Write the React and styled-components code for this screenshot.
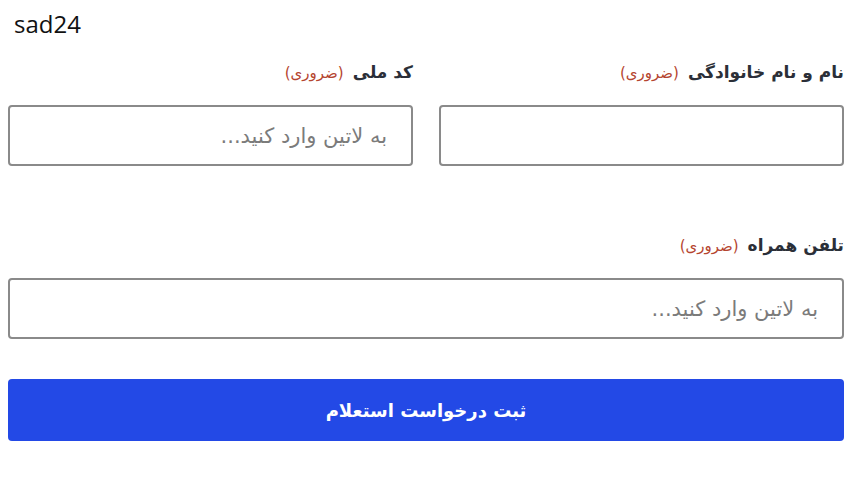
import React from 'react';
import styled, { createGlobalStyle } from 'styled-components';

const GlobalStyle = createGlobalStyle`
  body {
    margin: 0;
    padding: 0;
    background: #fff;
    font-family: 'DejaVu Sans', 'Noto Sans', sans-serif;
  }
`;

const Page = styled.div`
  padding: 10px 6px 0 8px;
`;

const Brand = styled.div`
  font-family: 'Open Sans', 'Noto Sans', sans-serif;
  font-size: 24px;
  color: #111;
  padding-left: 6px;
  height: 30px;
  line-height: 28px;
`;

const Form = styled.form`
  direction: rtl;
  display: grid;
  grid-template-columns: 1fr 1fr;
  column-gap: 26px;
  row-gap: 68px;
  margin-top: 21px;
`;

const Field = styled.div`
  display: flex;
  flex-direction: column;
  gap: 22px;
  grid-column: ${(p) => (p.$wide ? '1 / -1' : 'auto')};
`;

const Label = styled.label`
  display: flex;
  align-items: baseline;
  gap: 9px;
  height: 22px;
  line-height: 22px;
  font-size: 17px;
  font-weight: bold;
  color: #2b2f38;
`;

const Required = styled.span`
  font-size: 15px;
  font-weight: normal;
  color: #b5452f;
`;

const Input = styled.input`
  box-sizing: border-box;
  width: 100%;
  height: 61px;
  padding: 0 24px;
  border: 2px solid #8a8a8a;
  border-radius: 4px;
  font-family: inherit;
  font-size: 21px;
  color: #333;
  background: #fff;
  outline: none;

  &::placeholder {
    color: #7b7b7b;
  }
`;

const Submit = styled.button`
  box-sizing: border-box;
  grid-column: 1 / -1;
  margin-top: -28px;
  height: 62px;
  border: none;
  border-radius: 4px;
  background: #2349e6;
  color: #fff;
  font-family: inherit;
  font-size: 18px;
  font-weight: bold;
  cursor: pointer;
`;

const fields = [
  { id: 'name', label: 'نام و نام خانوادگی', placeholder: '' },
  { id: 'code', label: 'کد ملی', placeholder: 'به لاتین وارد کنید...' },
  { id: 'phone', label: 'تلفن همراه', placeholder: 'به لاتین وارد کنید...', wide: true },
];

export default function App() {
  return (
    <Page>
      <GlobalStyle />
      <Brand>sad24</Brand>
      <Form onSubmit={(e) => e.preventDefault()}>
        {fields.map((f) => (
          <Field key={f.id} $wide={f.wide}>
            <Label htmlFor={f.id}>
              {f.label}
              <Required>(ضروری)</Required>
            </Label>
            <Input id={f.id} placeholder={f.placeholder} />
          </Field>
        ))}
        <Submit type="submit">ثبت درخواست استعلام</Submit>
      </Form>
    </Page>
  );
}
